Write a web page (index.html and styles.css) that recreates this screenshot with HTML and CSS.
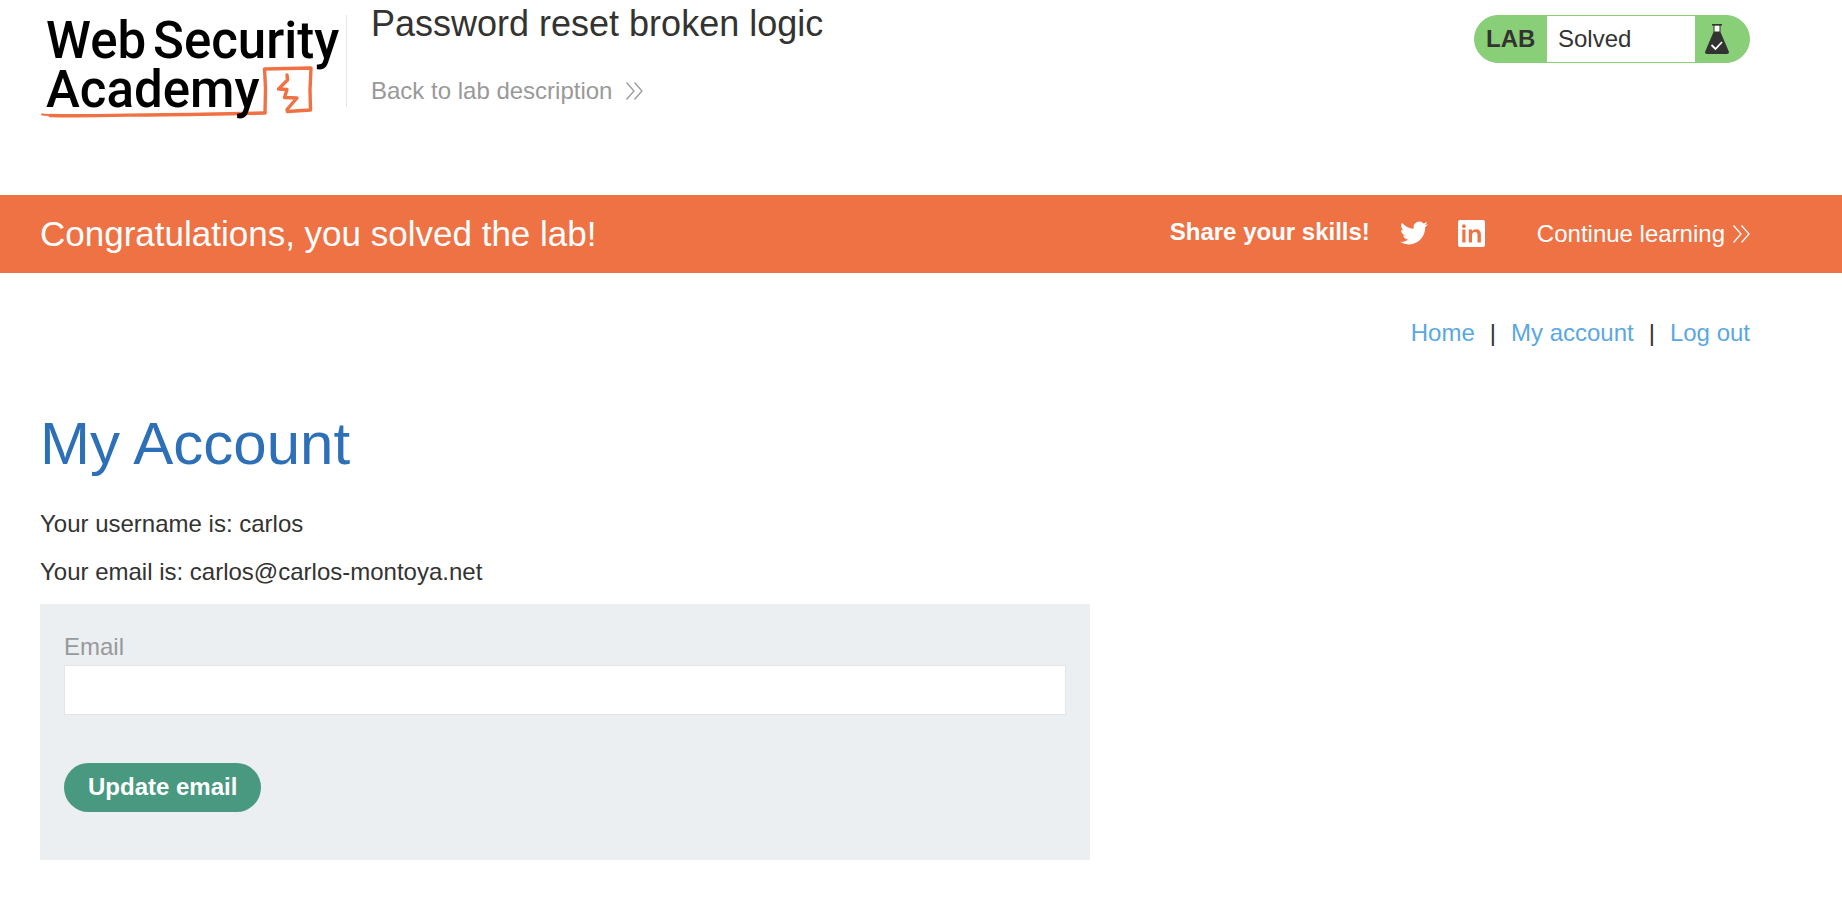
FILE: index.html
```html
<!DOCTYPE html>
<html lang="en">
<head>
<meta charset="utf-8">
<meta name="viewport" content="width=device-width, initial-scale=1">
<title>Password reset broken logic</title>
<link rel="stylesheet" href="styles.css">
</head>
<body>
<header class="lab-header">
  <a class="logo" href="#" aria-label="Web Security Academy">
    <svg viewBox="40 0 300 122" width="300" height="122">
      <g fill="none" stroke="#f07143" stroke-linejoin="round" stroke-linecap="round">
        <path stroke-width="3.400" d="M265 112.500 L265.500 88 L264.500 69 L311 68 L310 90 L310.500 110 L287.500 111.500 L287 109.500 L297 98 L284.500 97.500 L287 89.500 L278.500 89 L287.500 80 L287 75"/>
        <path stroke-width="3.400" d="M50 115.500 C90 116.500 140 114.500 190 114.500 L265 113"/>
        <path stroke-width="2" d="M42 114.500 L60 116"/>
      </g>
      <text class="logo-text" x="46" y="58">Web</text>
      <text class="logo-text" x="153" y="58">Security</text>
      <text class="logo-text" x="46" y="107">Academy</text>
    </svg>
  </a>
  <div class="title">
    <h2>Password reset broken logic</h2>
    <a class="back" href="#">Back to lab description
      <svg viewBox="0 0 17 18" width="17" height="18"><path d="M0.500 0.500 L8 9 L0.500 17.500 M8.500 0.500 L16 9 L8.500 17.500"/></svg>
    </a>
  </div>
  <div class="status">
    <span class="status-lab">LAB</span>
    <p class="status-text">Solved</p>
    <span class="status-icon">
      <svg viewBox="0 0 24 30" width="24" height="30">
        <path fill="#fff" d="M9 2h6v7H9z"/>
        <path fill="#333332" fill-rule="evenodd" d="M7 0h10v1.500h-1.500V8l8.300 19.500c.5 1.400-.3 2.500-1.800 2.500H2c-1.500 0-2.300-1.100-1.800-2.500L8.500 8V1.500H7zM9.500 1.500V7.500h5V1.500z"/>
        <path fill="none" stroke="#fff" stroke-width="1.800" d="M6.500 21 L10.500 25 L17 18"/>
      </svg>
    </span>
  </div>
</header>

<section class="banner">
  <h4>Congratulations, you solved the lab!</h4>
  <div class="share">
    <strong>Share your skills!</strong>
    <a href="#" aria-label="Twitter">
      <svg viewBox="0 0 24 24" width="28" height="28"><path d="M23.953 4.570a10 10 0 01-2.825.775 4.958 4.958 0 002.163-2.723c-.951.555-2.005.959-3.127 1.184a4.920 4.920 0 00-8.384 4.482C7.690 8.095 4.067 6.130 1.640 3.162a4.822 4.822 0 00-.666 2.475c0 1.710.870 3.213 2.188 4.096a4.904 4.904 0 01-2.228-.616v.060a4.923 4.923 0 003.946 4.827 4.996 4.996 0 01-2.212.085 4.936 4.936 0 004.604 3.417 9.867 9.867 0 01-6.102 2.105c-.390 0-.779-.023-1.170-.067a13.995 13.995 0 007.557 2.209c9.053 0 13.998-7.496 13.998-13.985 0-.210 0-.420-.015-.630A9.935 9.935 0 0024 4.590z"/></svg>
    </a>
    <a href="#" aria-label="LinkedIn">
      <svg viewBox="0 0 27 27" width="27" height="27"><path fill-rule="evenodd" d="M2 0h23a2 2 0 0 1 2 2v23a2 2 0 0 1-2 2H2a2 2 0 0 1-2-2V2a2 2 0 0 1 2-2zM4.300 9.500V22.500H7.500V9.500zM5.900 4.300a1.900 1.900 0 1 0 0 3.800a1.900 1.900 0 0 0 0-3.800zM10.800 9.500V22.500H14V15.500C14 13.200 15 11.900 17 11.900S19.500 13.200 19.500 15.500V22.500H22.900V14.600C22.900 11 21 9.200 18.300 9.200C16.200 9.200 14.800 10 14 11.200V9.500z"/></svg>
    </a>
  </div>
  <a class="continue" href="#">Continue learning
    <svg viewBox="0 0 17 18" width="17" height="18"><path d="M0.500 0.500 L8 9 L0.500 17.500 M8.500 0.500 L16 9 L8.500 17.500"/></svg>
  </a>
</section>

<main class="content">
  <nav class="links">
    <a href="#">Home</a><span>|</span><a href="#">My account</a><span>|</span><a href="#">Log out</a>
  </nav>
  <h1>My Account</h1>
  <p>Your username is: carlos</p>
  <p>Your email is: carlos@carlos-montoya.net</p>
  <form class="email-form">
    <label for="email">Email</label>
    <input id="email" type="email" name="email">
    <button type="button">Update email</button>
  </form>
</main>
</body>
</html>
```
FILE: styles.css
```css
* {
  box-sizing: border-box;
}

body {
  margin: 0;
  background: #fff;
  color: #333332;
  font: 24px/32px "Liberation Sans", Arial, sans-serif;
}

h1, h2, h4, p {
  margin: 0;
  font-weight: 400;
}

a {
  text-decoration: none;
}

svg {
  display: block;
  flex: none;
}

.lab-header {
  display: flex;
  align-items: flex-start;
  min-height: 195px;
  padding: 0 92px 0 40px;
}

.logo-text {
  font: 500 51px Roboto, sans-serif;
  fill: #000;
}

.logo svg {
  overflow: visible;
}

.title {
  flex: 1;
  position: relative;
  margin-left: 6px;
  padding: 4px 0 0 25px;
}

.title::before {
  content: "";
  position: absolute;
  left: 0;
  top: 15px;
  bottom: 0;
  width: 1px;
  background: #e5e5e5;
}

.title h2 {
  font-size: 36px;
  line-height: 40px;
}

.back, .continue {
  display: flex;
  align-items: center;
}

.back {
  gap: 14px;
  margin-top: 31px;
  color: #999;
}

.back path, .continue path {
  fill: none;
  stroke: currentColor;
  stroke-width: 1.3;
}

.status {
  display: flex;
  width: 276px;
  height: 48px;
  margin-top: 15px;
  border: 1px solid #89cf78;
  border-radius: 24px;
  background: #89cf78;
  overflow: hidden;
  line-height: 46px;
}

.status-lab {
  width: 72px;
  padding-left: 11px;
  font-weight: 700;
}

.status-text {
  flex: 1;
  padding-left: 11px;
  background: #fff;
}

.status-icon {
  width: 54px;
  padding: 8px 0 0 10px;
}

.banner {
  display: flex;
  align-items: center;
  min-height: 78px;
  padding: 0 92px 0 40px;
  background: #ee7244;
  color: #fff;
}

.banner h4 {
  flex: 1;
  font-size: 35px;
  line-height: 40px;
}

.share {
  display: flex;
  align-items: center;
  gap: 30px;
  margin-right: 52px;
  padding-bottom: 2px;
}

.share strong {
  padding-bottom: 2px;
}

.share svg {
  fill: #fff;
}

.continue {
  gap: 8px;
  color: #fff;
}

.content {
  padding: 44px 92px 40px 40px;
}

.links {
  display: flex;
  justify-content: flex-end;
  gap: 15px;
}

.links a {
  color: #5ba8e0;
}

h1 {
  margin: 59px 0 28px;
  color: #2d70b7;
  font-size: 60px;
  line-height: 72px;
}

.content p {
  margin-bottom: 16px;
}

.email-form {
  max-width: 1050px;
  padding: 29px 24px 48px;
  background: #ebeff2;
}

.email-form label {
  display: block;
  color: #999;
  line-height: 28px;
}

.email-form input {
  display: block;
  width: 100%;
  height: 50px;
  margin: 4px 0 48px;
  padding: 0 12px;
  border: 1px solid #e5e5e5;
  background: #fff;
  font: inherit;
}

.email-form button {
  display: block;
  padding: 0 24px 1px;
  border: 0;
  border-radius: 25px;
  background: #489980;
  color: #fff;
  font: inherit;
  font-weight: 700;
  line-height: 48px;
}
```
